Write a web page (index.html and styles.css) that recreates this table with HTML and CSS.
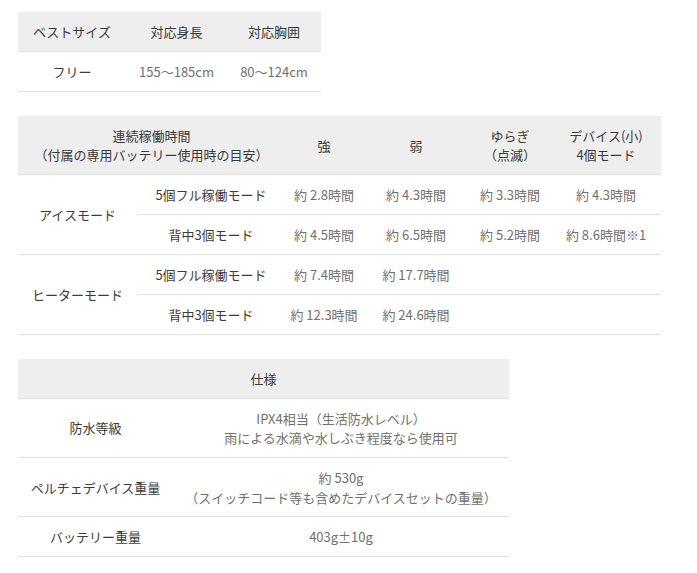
FILE: index.html
```html
<!DOCTYPE html>
<html lang="ja">
<head>
<meta charset="utf-8">
<link rel="stylesheet" href="styles.css">
</head>
<body>
<div class="page">
  <table class="spec t1">
    <colgroup><col class="c1-1"><col class="c1-2"><col class="c1-3"></colgroup>
    <tr class="head"><th>ベストサイズ</th><th>対応身長</th><th>対応胸囲</th></tr>
    <tr><td class="lab">フリー</td><td class="val">155〜185cm</td><td class="val">80〜124cm</td></tr>
  </table>

  <table class="spec t2">
    <colgroup><col class="c2-1"><col class="c2-2"><col class="c2-3"><col class="c2-4"><col class="c2-5"><col class="c2-6"></colgroup>
    <tr class="head"><th colspan="2">連続稼働時間<br>（付属の専用バッテリー使用時の目安）</th><th>強</th><th>弱</th><th>ゆらぎ<br>（点滅）</th><th>デバイス(小)<br>4個モード</th></tr>
    <tr><td class="lab" rowspan="2">アイスモード</td><td class="lab">5個フル稼働モード</td><td class="val">約 2.8時間</td><td class="val">約 4.3時間</td><td class="val">約 3.3時間</td><td class="val">約 4.3時間</td></tr>
    <tr><td class="lab">背中3個モード</td><td class="val">約 4.5時間</td><td class="val">約 6.5時間</td><td class="val">約 5.2時間</td><td class="val">約 8.6時間※1</td></tr>
    <tr><td class="lab" rowspan="2">ヒーターモード</td><td class="lab">5個フル稼働モード</td><td class="val">約 7.4時間</td><td class="val">約 17.7時間</td><td></td><td></td></tr>
    <tr><td class="lab">背中3個モード</td><td class="val">約 12.3時間</td><td class="val">約 24.6時間</td><td></td><td></td></tr>
  </table>

  <table class="spec t3">
    <colgroup><col class="c3-1"><col class="c3-2"></colgroup>
    <tr class="head"><th colspan="2">仕様</th></tr>
    <tr><td class="lab">防水等級</td><td class="val">IPX4相当（生活防水レベル）<br>雨による水滴や水しぶき程度なら使用可</td></tr>
    <tr><td class="lab">ペルチェデバイス重量</td><td class="val">約 530g<br>（スイッチコード等も含めたデバイスセットの重量）</td></tr>
    <tr><td class="lab">バッテリー重量</td><td class="val">403g±10g</td></tr>
  </table>
</div>
</body>
</html>
```
FILE: styles.css
```css
html, body {
  margin: 0;
  padding: 0;
  background: #fff;
}
.page {
  padding: 12px 0 0 18px;
  display: flex;
  flex-direction: column;
  align-items: flex-start;
  gap: 24px;
  font-family: "Noto Sans CJK JP", "Noto Sans", sans-serif;
  font-size: 13px;
  color: #333;
}
.spec {
  border-collapse: collapse;
  table-layout: fixed;
}
.spec th, .spec td {
  padding: 10px 0 9.4px;
  line-height: 19.5px;
  text-align: center;
  vertical-align: middle;
  border-bottom: 1px solid #e2e2e2;
  font-weight: 400;
}
.spec .head th {
  background: #eeeeee;
  color: #3a3a3a;
}
.spec .lab { color: #3c3c3c; }
.spec .val { color: #707070; }

.t1 { width: 303px; }
.c1-1 { width: 108px; }
.c1-2 { width: 101px; }
.c1-3 { width: 94px; }

.t2 { width: 643px; }
.c2-1 { width: 119px; }
.c2-2 { width: 148px; }
.c2-3 { width: 78px; }
.c2-4 { width: 106px; }
.c2-5 { width: 82px; }
.c2-6 { width: 110px; }

.t3 { width: 491px; }
.c3-1 { width: 155px; }
.c3-2 { width: 336px; }
```
